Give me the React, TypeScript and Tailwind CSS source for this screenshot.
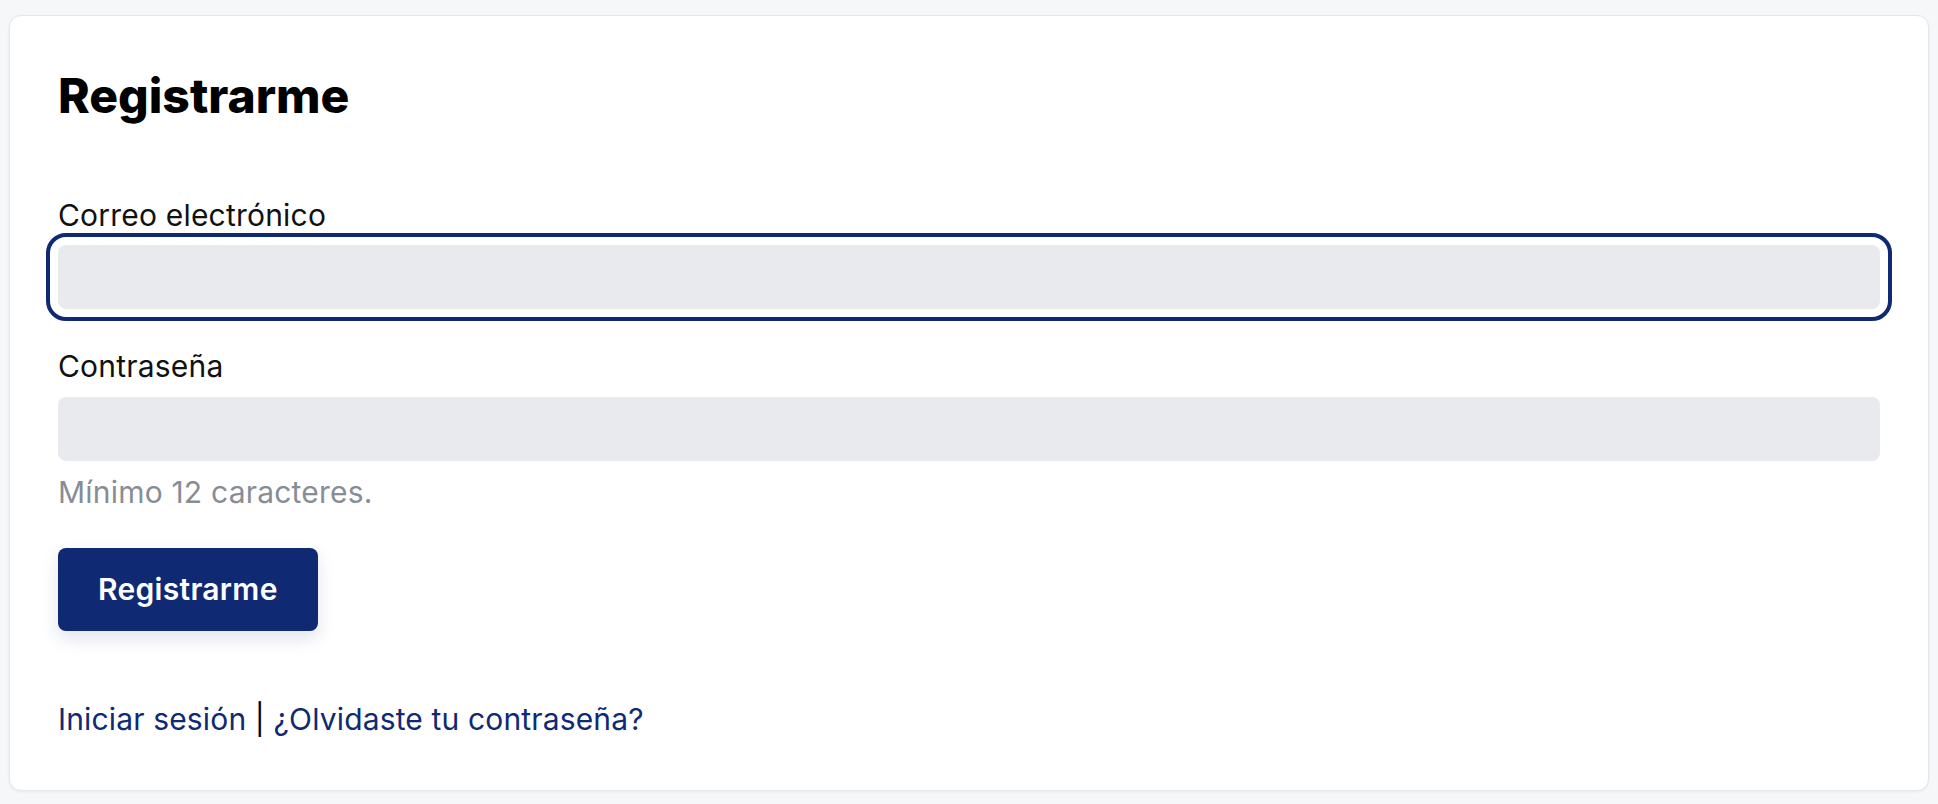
import React from "react";

export default function App() {
  return (
    <div
      className="min-h-screen bg-[#f6f7f9] px-[9px] pt-[15px] pb-[12px]"
      style={{ fontFamily: "Inter, 'Noto Sans', sans-serif" }}
    >
      <div className="rounded-[12px] border border-[#e4e6ea] bg-white px-[48px] pt-[51px] pb-[48px] shadow-[0_1px_3px_rgba(0,0,0,0.06)]">
        <h1 className="text-[48px] font-extrabold leading-[58px] text-black">
          Registrarme
        </h1>

        <div className="mt-[69px] flex flex-col">
          <label className="text-[30px] leading-[42px] tracking-[0.2px] text-[#111]">Correo electrónico</label>
          <input
            type="email"
            className="mt-[9px] h-[64px] w-full rounded-[8px] bg-[#e9eaee] px-4 text-[28px] outline-[4px] outline-solid outline-[#0f2a73] outline-offset-[8px]"
          />
        </div>

        <div className="mt-[36px] flex flex-col">
          <label className="text-[30px] leading-[42px] tracking-[0.2px] text-[#111]">Contraseña</label>
          <input
            type="password"
            className="mt-[10px] h-[64px] w-full rounded-[8px] bg-[#e9eaee] px-4 text-[28px] outline-none"
          />
          <p className="mt-[10px] text-[30px] leading-[42px] tracking-[0.2px] text-[#878d96]">Mínimo 12 caracteres.</p>
        </div>

        <button className="mt-[35px] h-[83px] rounded-[8px] bg-[#0f2a73] px-[40px] text-[30px] font-semibold tracking-[0.3px] text-white shadow-[0_8px_18px_rgba(15,42,115,0.12)]">
          Registrarme
        </button>

        <div className="mt-[66px] text-[30px] leading-[45px] tracking-[0.15px]">
          <a href="#" className="text-[#0f2a73]">Iniciar sesión</a>
          <span className="text-black"> | </span>
          <a href="#" className="text-[#0f2a73]">¿Olvidaste tu contraseña?</a>
        </div>
      </div>
    </div>
  );
}
